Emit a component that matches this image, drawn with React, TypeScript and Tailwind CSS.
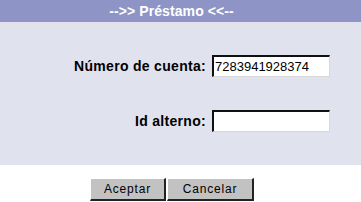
const font = { fontFamily: '"Liberation Sans", Arial, sans-serif' }

function Field({ label, value }: { label: string; value?: string }) {
  return (
    <div className="flex items-center justify-end pr-[31px]">
      <label className="text-[14px] font-bold text-black mr-[6px] tracking-[0.3px]">{label}</label>
      <input
        readOnly
        value={value ?? ''}
        className="w-[118px] h-[22px] bg-white border-t-2 border-l-2 border-t-[#111] border-l-[#111] border-r border-b border-r-[#d8d8d8] border-b-[#d8d8d8] px-[1px] text-[13px] text-black outline-none"
        style={font}
      />
    </div>
  )
}

function Button({ children, w }: { children: string; w: string }) {
  return (
    <button
      className={`${w} h-[23px] bg-[#c2c2c2] border-t border-l border-t-white border-l-white border-r-2 border-b-2 border-r-[#222] border-b-[#222] text-[12px] text-black tracking-[0.8px]`}
      style={font}
    >
      {children}
    </button>
  )
}

export default function App() {
  return (
    <div className="w-[361px] h-[202px] bg-white flex flex-col" style={font}>
      <div className="h-[22px] bg-[#8e95c6] flex items-center justify-center text-white text-[14px] font-bold tracking-[0.1px] pr-[18px]">
        --&gt;&gt; Préstamo &lt;&lt;--
      </div>
      <div className="h-[143px] bg-[#e0e2ee] flex flex-col gap-[33px] pt-[33px]">
        <Field label="Número de cuenta:" value="7283941928374" />
        <Field label="Id alterno:" />
      </div>
      <div className="flex gap-[1px] pl-[90px] pt-[13px]">
        <Button w="w-[76px]">Aceptar</Button>
        <Button w="w-[87px]">Cancelar</Button>
      </div>
    </div>
  )
}
